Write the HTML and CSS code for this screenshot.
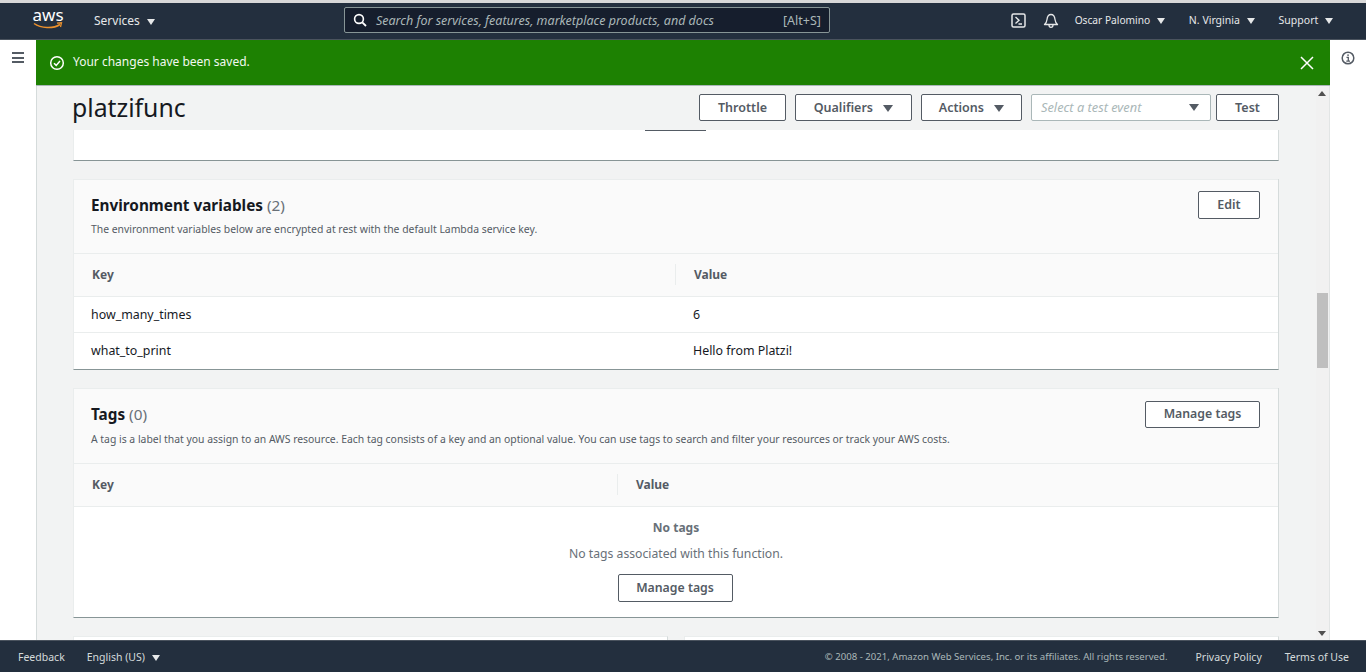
FILE: index.html
```html
<!DOCTYPE html>
<html lang="en">
<head>
    <meta charset="UTF-8">
    <meta name="viewport" content="width=device-width, initial-scale=1.0">
    <title>platzifunc - Lambda</title>
    <link rel="stylesheet" href="styles.css">
</head>
<body>
    <div class="top-strip"></div>
    <nav class="navbar">
        <div class="logo">
            <span class="logo-text">aws</span>
            <svg class="logo-smile" width="30" height="8" viewBox="0 0 30 8"><path d="M1 1.5C8 6.5 20 7 27 2.5" fill="none" stroke="#ec912d" stroke-width="1.5"/><path d="M24 1.2l4.5-.4-1 4.2" fill="none" stroke="#ec912d" stroke-width="1.3"/></svg>
        </div>
        <a class="nav-link services">Services <span class="caret"></span></a>
        <div class="search">
            <svg width="14" height="14" viewBox="0 0 14 14"><circle cx="6" cy="6" r="4.4" fill="none" stroke="#fff" stroke-width="1.6"/><path d="M9.3 9.3l3.7 3.7" stroke="#fff" stroke-width="1.8"/></svg>
            <span class="search-text">Search for services, features, marketplace products, and docs</span>
            <span class="search-key">[Alt+S]</span>
        </div>
        <div class="nav-right">
            <svg class="shell-icon" width="15" height="15" viewBox="0 0 15 15"><rect x="1" y="1" width="13" height="13" rx="1.5" fill="none" stroke="#e6e8e9" stroke-width="1.5"/><path d="M4.5 4l3.5 3.2-3.5 3.3M7.5 11h3.5" fill="none" stroke="#e6e8e9" stroke-width="1.4"/></svg>
            <svg class="bell-icon" width="16" height="15" viewBox="0 0 16 15"><path d="M1.5 11.5c1.800-1.500 2.300-3 2.500-5C4.300 3.500 5.800 1.500 8 1.500s3.700 2 4 5c.2 2 .7 3.500 2.500 5z" fill="none" stroke="#e6e8e9" stroke-width="1.300" stroke-linejoin="round"/><path d="M6 12c0 1.600 .9 2.300 2 2.300s2-.7 2-2.300" fill="none" stroke="#e6e8e9" stroke-width="1.300"/></svg>
            <a class="nav-link user">Oscar Palomino <span class="caret"></span></a>
            <a class="nav-link region">N. Virginia <span class="caret"></span></a>
            <a class="nav-link support">Support <span class="caret"></span></a>
        </div>
    </nav>

    <div class="middle">
        <aside class="side-left">
            <div class="burger"><span></span><span></span><span></span></div>
        </aside>
        <div class="center">
            <div class="banner">
                <svg width="16" height="16" viewBox="0 0 16 16"><circle cx="8" cy="8" r="6.300" fill="none" stroke="#fff" stroke-width="1.500"/><path d="M5 8.200l2.200 2.200L11 6" fill="none" stroke="#fff" stroke-width="1.500"/></svg>
                <span class="banner-text">Your changes have been saved.</span>
                <svg class="banner-close" width="14" height="14" viewBox="0 0 14 14"><path d="M1 1l12 12M13 1L1 13" stroke="#fff" stroke-width="1.500"/></svg>
            </div>
            <div class="content">
                <div class="scroll-area">
                    <header class="page-head">
                        <h1>platzifunc</h1>
                        <div class="actions">
                            <button class="btn btn-throttle">Throttle</button>
                            <button class="btn btn-qualifiers">Qualifiers <span class="caret dark"></span></button>
                            <button class="btn btn-actions">Actions <span class="caret dark"></span></button>
                            <div class="select">
                                <span>Select a test event</span>
                                <span class="caret dark"></span>
                            </div>
                            <button class="btn btn-test">Test</button>
                        </div>
                    </header>

                    <div class="cards">
                        <section class="card stub">
                            <div class="stub-line"></div>
                        </section>

                        <section class="card">
                            <div class="card-head">
                                <div>
                                    <h2>Environment variables <span class="count">(2)</span></h2>
                                    <p>The environment variables below are encrypted at rest with the default Lambda service key.</p>
                                </div>
                                <button class="btn btn-edit">Edit</button>
                            </div>
                            <div class="thead">
                                <div class="th env-key">Key</div>
                                <div class="th">Value</div>
                            </div>
                            <div class="row">
                                <div class="td env-key">how_many_times</div>
                                <div class="td">6</div>
                            </div>
                            <div class="row last">
                                <div class="td env-key">what_to_print</div>
                                <div class="td">Hello from Platzi!</div>
                            </div>
                        </section>

                        <section class="card">
                            <div class="card-head tags-head">
                                <div>
                                    <h2>Tags <span class="count">(0)</span></h2>
                                    <p>A tag is a label that you assign to an AWS resource. Each tag consists of a key and an optional value. You can use tags to search and filter your resources or track your AWS costs.</p>
                                </div>
                                <button class="btn btn-manage">Manage tags</button>
                            </div>
                            <div class="thead">
                                <div class="th tag-key">Key</div>
                                <div class="th">Value</div>
                            </div>
                            <div class="empty">
                                <strong>No tags</strong>
                                <span>No tags associated with this function.</span>
                                <button class="btn btn-manage">Manage tags</button>
                            </div>
                        </section>

                        <div class="split">
                            <section class="card split-left"></section>
                            <section class="card split-right"></section>
                        </div>
                    </div>
                </div>
                <div class="scrollbar">
                    <span class="arrow up"></span>
                    <span class="thumb"></span>
                    <span class="arrow down"></span>
                </div>
            </div>
        </div>
        <aside class="side-right">
            <svg width="14" height="14" viewBox="0 0 14 14"><circle cx="7" cy="7" r="5.800" fill="none" stroke="#545b64" stroke-width="1.500"/><path d="M5.500 6.300H7.300V10M5.300 10.200H9" fill="none" stroke="#545b64" stroke-width="1.300"/><rect x="6.300" y="3.400" width="1.500" height="1.500" fill="#545b64"/></svg>
        </aside>
    </div>

    <footer class="footer">
        <a class="foot-link">Feedback</a>
        <a class="foot-link lang">English (US) <span class="caret"></span></a>
        <span class="copyright">© 2008 - 2021, Amazon Web Services, Inc. or its affiliates. All rights reserved.</span>
        <a class="foot-link privacy">Privacy Policy</a>
        <a class="foot-link terms">Terms of Use</a>
    </footer>
</body>
</html>
```

FILE: styles.css
```css
* {
    box-sizing: border-box;
}

html, body {
    height: 100%;
}

body {
    margin: 0;
    height: 672px;
    overflow: hidden;
    display: flex;
    flex-direction: column;
    font-family: "Noto Sans", "Open Sans", sans-serif;
    font-size: 12px;
    color: #16191f;
    background-color: #fff;
}

.top-strip {
    height: 3px;
    background-color: #d8d8d8;
}

.caret {
    display: inline-block;
    width: 0;
    height: 0;
    margin-left: 4px;
    border-left: 4.5px solid transparent;
    border-right: 4.5px solid transparent;
    border-top: 6px solid #e6e8e9;
}

.caret.dark {
    border-left-width: 5px;
    border-right-width: 5px;
    border-top-width: 7px;
    border-top-color: #545b64;
    margin-left: 7px;
}

/* navbar */
.navbar {
    height: 37px;
    padding-bottom: 2px;
    display: flex;
    align-items: center;
    background-color: #232f3e;
    border-bottom: 1px solid #4a535e;
    color: #e6e8e9;
}

.logo {
    width: 30px;
    margin-left: 33px;
    display: flex;
    flex-direction: column;
    align-items: center;
    height: 28px;
}

.logo-text {
    font-size: 17px;
    line-height: 18px;
    color: #fff;
}

.logo-smile {
    margin-top: -2px;
}

.nav-link {
    font-size: 12px;
    white-space: nowrap;
}

.services {
    margin-left: 31px;
}

.search {
    width: 486px;
    height: 26px;
    margin-left: 189px;
    padding: 0 8px;
    display: flex;
    align-items: center;
    background-color: #161e2d;
    border: 1px solid #879596;
    border-radius: 2px;
    font-size: 12.5px;
}

.search-text {
    margin-left: 9px;
    font-style: italic;
    color: #aab7b8;
}

.search-key {
    margin-left: auto;
    color: #aab7b8;
}

.nav-right {
    margin-left: auto;
    display: flex;
    align-items: center;
    padding-right: 33px;
}

.bell-icon {
    margin-left: 17px;
}

.user {
    margin-left: 16px;
    font-size: 10.2px;
}

.region {
    margin-left: 24px;
    font-size: 10.5px;
}

.support {
    margin-left: 24px;
    font-size: 10.5px;
}

/* page body */
.middle {
    flex: 1;
    min-height: 0;
    display: flex;
}

.side-left {
    width: 36px;
    padding: 12px 0 0 12px;
}

.burger span {
    display: block;
    width: 12px;
    height: 2px;
    margin-bottom: 2.5px;
    background-color: #545b64;
}

.side-right {
    width: 36px;
    padding: 11px 0 0 11px;
}

.center {
    flex: 1;
    min-width: 0;
    display: flex;
    flex-direction: column;
}

.banner {
    height: 46px;
    padding: 0 16px 0 13px;
    display: flex;
    align-items: center;
    background-color: #1d8102;
    border-bottom: 1px solid #aab7b8;
    color: #f2f8f0;
}

.banner-text {
    margin-left: 8px;
    margin-bottom: 2px;
}

.banner-close {
    margin-left: auto;
}

.content {
    flex: 1;
    min-height: 0;
    display: flex;
    background-color: #f2f3f3;
    border-left: 1px solid #d5dbdb;
}

.scroll-area {
    flex: 1;
    min-width: 0;
    overflow: hidden;
    padding: 0 37px 0 36px;
}

.page-head {
    height: 44px;
    padding-bottom: 2px;
    display: flex;
    align-items: center;
    justify-content: space-between;
}

h1 {
    margin: 0 0 0 -1px;
    font-size: 24.8px;
    font-weight: 400;
}

.actions {
    display: flex;
    align-items: center;
}

.btn {
    height: 27px;
    padding: 0;
    background-color: #fff;
    border: 1px solid #545b64;
    border-radius: 2px;
    color: #545b64;
    font-family: inherit;
    font-size: 12.5px;
    font-weight: 600;
    cursor: pointer;
}

.btn-throttle {
    width: 87px;
}

.btn-qualifiers {
    width: 117px;
    margin-left: 9px;
}

.btn-actions {
    width: 101px;
    margin-left: 9px;
}

.select {
    width: 180px;
    height: 27px;
    margin-left: 9px;
    padding: 0 11px 0 9px;
    display: flex;
    align-items: center;
    justify-content: space-between;
    background-color: #fff;
    border: 1px solid #aab7b8;
    border-radius: 2px;
    font-size: 12.8px;
    font-style: italic;
    color: #aab7b8;
}

.btn-test {
    width: 63px;
    margin-left: 5px;
}

.btn-edit {
    width: 62px;
    height: 28px;
    padding-bottom: 2px;
}

.btn-manage {
    width: 115px;
    padding-bottom: 2px;
    font-size: 12.3px;
}

.tags-head .btn-manage {
    margin-top: 1px;
}

.empty .btn-manage {
    height: 28px;
    margin-right: 2px;
}

.cards {
    display: flex;
    flex-direction: column;
    gap: 18px;
}

.card {
    background-color: #fff;
    border-right: 1px solid #d5dbdb;
    border-left: 1px solid #eaeded;
    border-bottom: 1px solid #879596;
}

.stub {
    position: relative;
    height: 31px;
}

.stub-line {
    position: absolute;
    top: 0;
    left: 571px;
    width: 61px;
    height: 1px;
    background-color: #545b64;
}

.card-head {
    height: 75px;
    padding: 11px 18px 0 17px;
    display: flex;
    justify-content: space-between;
    align-items: flex-start;
    background-color: #fafafa;
    border-top: 1px solid #eaeded;
    border-bottom: 1px solid #eaeded;
}

.tags-head {
    height: 76px;
}

h2 {
    margin: 1px 0 0;
    font-size: 15.3px;
    line-height: 26px;
    font-weight: 700;
}

.count {
    font-weight: 400;
    color: #687078;
}

.card-head p {
    margin: 4px 0 0;
    font-size: 10.4px;
    line-height: 14px;
    color: #545b64;
}

.tags-head p {
    margin-top: 5px;
}

.thead {
    height: 43px;
    padding-bottom: 2px;
    display: flex;
    align-items: center;
    background-color: #fafafa;
    border-bottom: 1px solid #eaeded;
}

.th {
    flex: 1;
    padding-left: 18px;
    line-height: 21px;
    font-weight: 700;
    color: #545b64;
}

.env-key {
    flex: none;
    width: 602px;
}

.tag-key {
    flex: none;
    width: 544px;
    border-right: 1px solid #eaeded;
}

.thead .env-key {
    border-right: 1px solid #eaeded;
}

.row {
    height: 36px;
    display: flex;
    align-items: center;
    border-bottom: 1px solid #eaeded;
    font-size: 12.4px;
}

.row.last {
    padding-bottom: 1px;
    border-bottom: none;
}

.td {
    flex: 1;
    padding-left: 17px;
}

.empty {
    height: 110px;
    display: flex;
    flex-direction: column;
    align-items: center;
    color: #687078;
}

.empty strong {
    margin-top: 12px;
    line-height: 17px;
}

.empty span {
    margin-top: 9px;
    line-height: 17px;
    font-size: 12.2px;
}

.empty .btn {
    margin-top: 12px;
}

.split {
    display: flex;
    gap: 16px;
}

.split-left {
    width: 595px;
    height: 30px;
    border-top: 1px solid #eaeded;
}

.split-right {
    flex: 1;
    height: 30px;
    border-top: 1px solid #eaeded;
}

/* scrollbar */
.scrollbar {
    width: 14px;
    display: flex;
    flex-direction: column;
    align-items: center;
    padding: 5px 1px 4px 0;
    background-color: #f1f1f1;
    border-right: 1px solid #e2e5e5;
}

.arrow {
    width: 0;
    height: 0;
    border-left: 4px solid transparent;
    border-right: 4px solid transparent;
}

.arrow.up {
    border-bottom: 5px solid #505050;
}

.arrow.down {
    margin-top: auto;
    border-top: 5px solid #505050;
}

.thumb {
    width: 11px;
    height: 75px;
    margin-top: 197px;
    background-color: #bfbfbf;
}

/* footer */
.footer {
    height: 32px;
    display: flex;
    align-items: center;
    padding: 0 17px 0 18px;
    background-color: #232f3e;
    border-top: 1px solid #4a535e;
    color: #d5dbdb;
    font-size: 10.5px;
}

.lang {
    margin-left: 22px;
}

.copyright {
    margin-left: auto;
    font-size: 9.6px;
    color: #aab7b8;
}

.privacy {
    margin-left: 28px;
}

.terms {
    margin-left: 23px;
}
```
